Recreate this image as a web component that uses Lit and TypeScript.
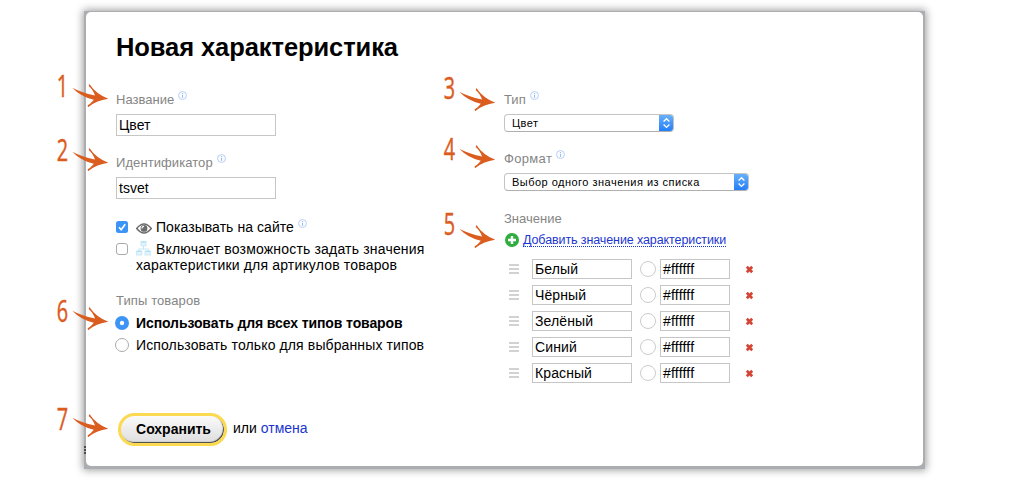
import { LitElement, html, css, svg, nothing } from "lit";
import { customElement, property } from "lit/decorators.js";

@customElement("info-icon")
class InfoIcon extends LitElement {
  static styles = css`
    :host { display: block; width: 9px; height: 9px; flex: none; }
    svg { display: block; }
  `;
  render() {
    return html`<svg width="9" height="9" viewBox="0 0 9 9">
      <circle cx="4.5" cy="4.5" r="4" fill="#f7faff" stroke="#b4cdef" stroke-width=".9" />
      <path d="M4.5 2v1M4.5 3.8v3.1" stroke="#9dbdea" stroke-width="1" />
    </svg>`;
  }
}

@customElement("step-marker")
class StepMarker extends LitElement {
  @property() label = "";
  @property({ type: Number }) lift = 0;
  static styles = css`
    :host { display: block; width: 52px; height: 50px; }
    svg { display: block; overflow: visible; }
    text { font-family: "Open Sans", sans-serif; font-weight: 400; font-size: 31px; fill: #db5c1f; stroke: #db5c1f; stroke-width: .45px; }
  `;
  render() {
    return html`<svg width="52" height="50" viewBox="0 0 52 50">
      <g transform=${`translate(6.5 ${48 - this.lift}) scale(.64 1)`}>
        <text text-anchor="middle">${this.label}</text>
      </g>
      <path fill="#db5c1f" d="M16.3 18.8 Q25 23.5 39 26.6 Q37 20.5 32.7 17 L33.4 15 Q40 25 52.3 29.8 Q40 31.5 32 38.3 L31.6 36.6 Q35 34.5 37.8 30.8 Q25 28 16.3 18.8Z" />
    </svg>`;
  }
}

@customElement("mac-select")
class MacSelect extends LitElement {
  @property() value = "";
  static styles = css`
    :host {
      display: flex; box-sizing: border-box; height: 18px; overflow: hidden;
      border: 1px solid #c4c4c4; border-bottom-color: #b0b0b0; border-radius: 4px; background: #fff;
    }
    .value {
      flex: 1; padding-left: 7px; white-space: nowrap;
      font: 11px/16px "Liberation Sans", sans-serif; letter-spacing: .48px; color: #000;
    }
    .knob {
      width: 15px; margin: -1px -1px -1px 0; background: linear-gradient(#6db3fa, #1e7cf8);
    }
    svg { display: block; }
  `;
  render() {
    return html`<span class="value">${this.value}</span>
      <span class="knob"><svg width="15" height="18" viewBox="0 0 15 18">
        <path d="M4.6 7.6 7.5 4.8l2.9 2.8M4.6 10.6l2.9 2.8 2.9-2.8" fill="none" stroke="#fff" stroke-width="1.4" />
      </svg></span>`;
  }
}

const eye = svg`<path d="M.7 5.5Q8-3.4 15.3 5.5Q8 14.4.7 5.5Z" fill="#fff" stroke="#6b6b6b" stroke-width="1.5"/>
  <circle cx="8" cy="5.4" r="3.4" fill="#6b6b6b"/><path d="M6 5.4A2 2 0 0 1 8 3.4" fill="none" stroke="#fff" stroke-width="1.1"/>`;

const tree = svg`<path d="M7.5 5v3M2.8 10V8h9.8v2" fill="none" stroke="#c6e6f5" stroke-width="1"/>
  <g fill="#e2f4fd" stroke="#c3e5f5" stroke-width=".8">
  <rect x="5" y=".5" width="5" height="4.4"/><rect x=".5" y="10" width="5.4" height="4"/><rect x="9" y="10" width="5.4" height="4"/></g>
  <path d="M1 10.4h4.4M9.5 10.4h4.4M5.4 1h4.2" stroke="#a5dbf5" stroke-width="1"/>`;

@customElement("app-root")
class AppRoot extends LitElement {
  static styles = css`
    :host {
      display: block; position: relative; width: 1010px; height: 484px; overflow: hidden; background: #fff;
      font: 14px/16px "Liberation Sans", Arial, sans-serif; color: #000;
    }
    * { box-sizing: border-box; }
    svg { display: block; flex: none; }
    .page { padding-top: 11px; height: 484px; }
    .frame {
      position: relative;
      margin: 0 0 0 84px; width: 841px; height: 458px; padding: 1px 2px 3px;
      background: #abadb0; box-shadow: 0 0 8px 1px rgba(0,0,0,.4);
    }
    .grip {
      position: absolute; left: 0; top: 435px; width: 2px; height: 8px;
      background: repeating-linear-gradient(#4c4c48 0 2px, #abadb0 2px 3px);
    }
    .panel { height: 454px; background: #fff; border-radius: 5px; padding: 20px 30px 0; }
    h1 { margin: 0 0 29px; font-size: 25.5px; line-height: 30px; letter-spacing: -.08px; white-space: nowrap; }
    .columns { display: grid; grid-template-columns: 388px 1fr; height: 322px; align-items: start; }
    .caption { display: flex; gap: 4px; height: 16px; font-size: 13px; line-height: 18px; color: #858585; white-space: nowrap; }
    .input { border: 1px solid #c6c6c6; background: #fff; padding-left: 2px; white-space: nowrap; }
    .main { width: 160px; height: 22px; line-height: 20px; margin: 7px 0 18px; }
    .main.last { margin-bottom: 20px; }
    .option { display: flex; white-space: nowrap; margin-bottom: 6px; }
    .option .mark { width: 20px; flex: none; padding-top: 2px; }
    .option .mark.round { padding-top: 1px; margin-left: -1px; width: 21px; }
    .option .icon { display: inline-block; width: 20px; vertical-align: top; }
    .eye { margin-top: 3px; }
    .show { letter-spacing: .06px; margin-right: 4px; }
    .incl { letter-spacing: .18px; }
    .art { letter-spacing: .17px; }
    .only { letter-spacing: .12px; }
    .wrap { display: block; }
    .row1 { display: flex; }
    .kinds { margin: 19px 0 7px; }
    .bold { font-weight: bold; letter-spacing: -.1px; }
    mac-select { margin: 7px 0 18px; }
    .type { width: 170px; }
    .format { width: 245px; margin-bottom: 19px; }
    .add { display: flex; gap: 4px; margin: 6px 0 11px 1px; height: 16px; align-items: flex-start; }
    .add svg { margin-top: 1px; }
    .link { color: #1a35d0; }
    .add .link { font-size: 12.5px; letter-spacing: -.1px; line-height: 17px; height: 15px; border-bottom: 1px dotted #1a35d0; white-space: nowrap; }
    .value-row { display: flex; align-items: center; height: 20px; margin-bottom: 6px; padding-left: 5px; }
    .name { width: 100px; height: 20px; line-height: 18px; margin-left: 13px; letter-spacing: .1px; }
    .swatch { width: 16px; height: 16px; border: 1px solid #ccc; border-radius: 50%; margin: 0 4px 0 8px; }
    .hex { width: 70px; height: 20px; line-height: 18px; letter-spacing: .2px; }
    .remove { margin-left: 15px; }
    .actions { display: flex; align-items: center; padding-left: 2px; height: 33px; white-space: nowrap; }
    .save {
      font: bold 14px/16px "Liberation Sans", sans-serif; width: 109px; height: 33px; padding: 0 0 1px 2px;
      border: 3px solid #fbd951; border-radius: 17px; color: #000;
      background: linear-gradient(#fafafa, #dedede); background-clip: padding-box; box-shadow: inset -1px -1px 1px #444;
    }
    .or { margin: 0 4px 3px 6px; }
    .cancel { margin-bottom: 3px; }
    step-marker { position: absolute; }
    .s1 { left: 56px; top: 69px; }
    .s2 { left: 56px; top: 132.5px; }
    .s3 { left: 443px; top: 73px; }
    .s4 { left: 443px; top: 130px; }
    .s5 { left: 443px; top: 209.5px; }
    .s6 { left: 56px; top: 291.5px; }
    .s7 { left: 56px; top: 399px; }
  `;

  names = ["Белый", "Чёрный", "Зелёный", "Синий", "Красный"];
  steps = [20, 20, 22, 18, 23, 18.5, 17];

  caption(text: string, spacing = 0, info = true, cls = "") {
    return html`<div class="caption ${cls}"><span style="letter-spacing:${spacing}px">${text}</span>${info ? html`<info-icon></info-icon>` : nothing}</div>`;
  }

  render() {
    return html`<div class="page"><div class="frame"><span class="grip"></span><div class="panel">
      <h1>Новая характеристика</h1>
      <div class="columns">
        <div>
          ${this.caption("Название", 0.03)}
          <div class="input main">Цвет</div>
          ${this.caption("Идентификатор", 0.08)}
          <div class="input main last">tsvet</div>
          <div class="option">
            <span class="mark"><svg width="12" height="12"><rect width="12" height="12" rx="2.5" fill="#3d94f7"/><path d="M3 6.3 5.2 8.8 9.2 3.2" fill="none" stroke="#fff" stroke-width="1.6"/></svg></span>
            <span class="icon"><svg class="eye" width="16" height="12" viewBox="0 -1 16 12">${eye}</svg></span>
            <span class="show">Показывать на сайте</span>
            <info-icon></info-icon>
          </div>
          <div class="option">
            <span class="mark"><svg width="12" height="12"><rect x=".5" y=".5" width="11" height="11" rx="2.5" fill="#fff" stroke="#aaa"/></svg></span>
            <span class="wrap"><span class="row1"><span class="icon"><svg width="15" height="15">${tree}</svg></span><span class="incl">Включает возможность задать значения</span></span><span class="art">характеристики для артикулов товаров</span></span>
          </div>
          ${this.caption("Типы товаров", 0.1, false, "kinds")}
          <div class="option">
            <span class="mark round"><svg width="14" height="14"><circle cx="7" cy="7" r="7" fill="#3d94f7"/><circle cx="7" cy="7" r="2.2" fill="#fff"/></svg></span>
            <span class="bold">Использовать для всех типов товаров</span>
          </div>
          <div class="option">
            <span class="mark round"><svg width="14" height="14"><circle cx="7" cy="7" r="6.5" fill="#fff" stroke="#aaa"/></svg></span>
            <span class="only">Использовать только для выбранных типов</span>
          </div>
        </div>
        <div>
          ${this.caption("Тип")}
          <mac-select class="type" value="Цвет"></mac-select>
          ${this.caption("Формат", 0.33)}
          <mac-select class="format" value="Выбор одного значения из списка"></mac-select>
          ${this.caption("Значение", 0, false)}
          <div class="add">
            <svg width="14" height="14"><circle cx="7" cy="7" r="7" fill="#2fae3f"/><path d="M7 3v8M3 7h8" stroke="#fff" stroke-width="2.4"/></svg>
            <span class="link">Добавить значение характеристики</span>
          </div>
          ${this.names.map((n) => html`<div class="value-row">
            <svg width="10" height="10"><path d="M0 1h10M0 5h10M0 9h10" stroke="#c4c4c4" stroke-width="1.7"/></svg>
            <div class="input name">${n}</div><span class="swatch"></span><div class="input hex">#ffffff</div>
            <svg class="remove" width="9" height="9"><path d="M1.8 1.8l5.4 5.4M7.2 1.8 1.8 7.2" stroke="#d34434" stroke-width="2.7"/></svg>
          </div>`)}
        </div>
      </div>
      <div class="actions"><button class="save">Сохранить</button><span class="or">или</span><span class="link cancel">отмена</span></div>
    </div></div></div>
    ${this.steps.map((lift, i) => html`<step-marker class="s${i + 1}" label=${i + 1} lift=${lift}></step-marker>`)}`;
  }
}
